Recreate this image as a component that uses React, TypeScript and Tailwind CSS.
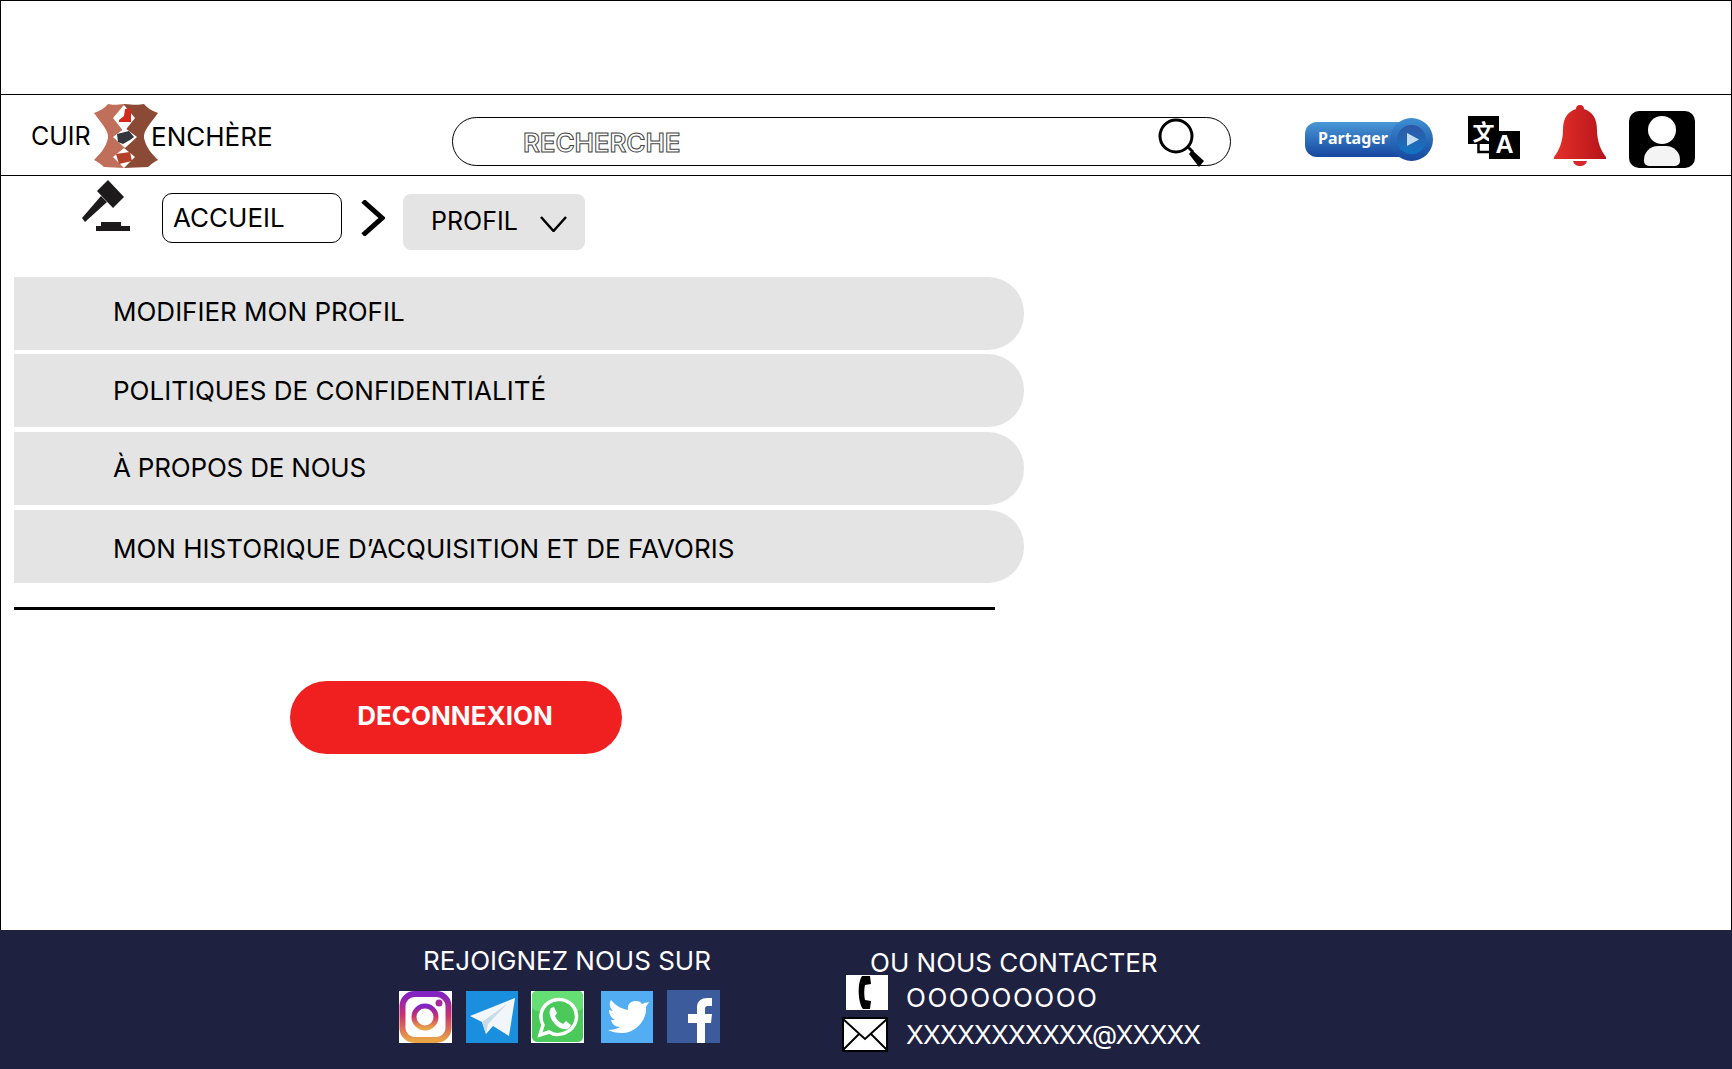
const menuItems = [
  { label: "MODIFIER MON PROFIL", className: "pb-[4px]" },
  { label: "POLITIQUES DE CONFIDENTIALITÉ", className: "" },
  { label: "À PROPOS DE NOUS", className: "mt-[1px] pb-[2px] tracking-[-0.2px]" },
  { label: "MON HISTORIQUE D’ACQUISITION ET DE FAVORIS", className: "mt-[1px] pt-[5px]" },
];

function LeatherLogo() {
  return (
    <svg viewBox="0 0 64 64" className="mt-[1px] h-[64px] w-[64px] shrink-0">
      <path
        d="M14 0 C18 1 22 1 30 0 L30 64 L10 63 C7 60 4 58 0 56 C5 51 12 44 14 34 C15 26 6 18 0 9 C6 7 11 4 14 0Z"
        fill="#c0705a"
      />
      <path
        d="M50 0 C45 1 40 1 30 0 L30 64 L54 63 C57 60 60 58 64 56 C59 51 52 44 50 34 C49 26 58 18 64 9 C58 7 53 4 50 0Z"
        fill="#8a4a35"
      />
      <path d="M30 1 L41 14 L30 28 L19 14Z" fill="#fff" />
      <path d="M31 24 L43 33 L31 44 L19 33Z" fill="#fff" />
      <path d="M30 44 L41 53 L30 64 L19 53Z" fill="#fff" />
      <path d="M31 5 L37 4 L37 18 L25 18 L25 16 L30 12Z" fill="#d22b1e" />
      <path d="M23 30 L35 27 L40 33 L36 36 L29 40 L24 38Z" fill="#34363c" />
      <path d="M22 50 L36 48 L38 57 L25 60Z" fill="#b5412a" />
    </svg>
  );
}

function Gavel() {
  return (
    <svg viewBox="0 0 48 51" className="h-[51px] w-[48px] shrink-0">
      <path d="M26 0 L42 17 L31 28 L15 11Z" fill="#1c1a1a" />
      <path d="M19 16 L25 22 L3 42 L0 38Z" fill="#1c1a1a" />
      <path d="M19 42 H39 V46 H48 V51 H14 V46 H19Z" fill="#1c1a1a" />
    </svg>
  );
}

function SearchGlass() {
  return (
    <svg viewBox="0 0 48 50" className="h-[50px] w-[50px]">
      <circle cx="19" cy="19" r="16" fill="none" stroke="#000" strokeWidth="3" />
      <path d="M30 31 L33 30 L37 34 L35 36Z" fill="#000" />
      <path d="M35 33 L47 44 L42 50 L32 37Z" fill="#000" />
    </svg>
  );
}

function ShareButton() {
  return (
    <div className="relative mt-[9px] ml-[74px] h-[43px] w-[128px] shrink-0">
      <div className="absolute top-[4px] left-0 h-[35px] w-[112px] rounded-[12px] bg-gradient-to-b from-[#4a98d6] to-[#17479f]" />
      <div className="absolute top-0 right-0 flex h-[43px] w-[43px] items-center justify-center rounded-full bg-gradient-to-b from-[#3f8fd2] to-[#17479f]">
        <div className="flex h-[29px] w-[29px] items-center justify-center rounded-full bg-gradient-to-b from-[#2d58a5] to-[#0d74c2]">
          <svg viewBox="0 0 12 13" className="ml-[2px] h-[13px] w-[12px]">
            <path d="M0 0 L12 6.5 L0 13Z" fill="#c4ddf3" />
          </svg>
        </div>
      </div>
      <span className="absolute top-[3px] left-[13px] font-['Noto_Sans',sans-serif] text-[16px] leading-[35px] font-bold text-white">
        Partager
      </span>
    </div>
  );
}

function TranslateIcon() {
  return (
    <div className="relative mt-[4px] ml-[35px] h-[43px] w-[52px] shrink-0">
      <div className="absolute top-0 left-0 flex h-[28px] w-[31px] items-center justify-center bg-black font-['Noto_Sans_CJK_SC',sans-serif] text-[22px] leading-none font-bold text-white">
        文
      </div>
      <svg viewBox="0 0 12 10" className="absolute top-[28px] left-[9px] h-[10px] w-[12px]">
        <path d="M1.5 0 V8 H12" fill="none" stroke="#000" strokeWidth="2.5" />
      </svg>
      <div className="absolute top-[15px] left-[21px] flex h-[28px] w-[31px] items-center justify-center bg-black font-['Liberation_Sans',sans-serif] text-[25px] leading-none font-bold text-white">
        A
      </div>
    </div>
  );
}

function Bell() {
  return (
    <svg viewBox="0 0 52 61" className="mt-[1px] ml-[34px] h-[61px] w-[52px] shrink-0">
      <defs>
        <linearGradient id="bellFill" x1="0" y1="0" x2="1" y2="0">
          <stop offset="0" stopColor="#e53029" />
          <stop offset="1" stopColor="#b5141a" />
        </linearGradient>
      </defs>
      <path
        d="M26 0 C29 0 30 2 30 4 C39 7 43 14 43 25 C43 36 47 46 52 52 L52 54 L0 54 L0 52 C5 46 9 36 9 25 C9 14 13 7 22 4 C22 2 23 0 26 0Z"
        fill="url(#bellFill)"
      />
      <path d="M19 56 H33 C32 60 29 61 26 61 C23 61 20 60 19 56Z" fill="#d8262a" />
    </svg>
  );
}

function ProfileIcon() {
  return (
    <div className="relative mt-[8px] ml-[23px] h-[57px] w-[66px] shrink-0 rounded-[10px] bg-black">
      <div className="absolute top-[5px] left-[19px] h-[28px] w-[28px] rounded-full bg-white" />
      <div className="absolute top-[35px] left-[15px] h-[20px] w-[36px] rounded-t-[14px] rounded-b-[5px] bg-[#f4f4f4]" />
    </div>
  );
}

function Instagram() {
  return (
    <div className="flex h-[52px] w-[53px] items-center justify-center bg-white">
      <svg viewBox="0 0 53 52" className="h-[52px] w-[53px]">
        <defs>
          <linearGradient id="igBorder" x1="0" y1="0" x2="0" y2="1">
            <stop offset="0" stopColor="#8223c4" />
            <stop offset="0.45" stopColor="#c9306f" />
            <stop offset="1" stopColor="#e9a347" />
          </linearGradient>
        </defs>
        <rect x="3.5" y="3" width="46" height="46" rx="12" fill="#fff" stroke="url(#igBorder)" strokeWidth="6" />
        <circle cx="26" cy="26" r="11" fill="none" stroke="url(#igBorder)" strokeWidth="5" />
        <circle cx="40" cy="12" r="3.5" fill="#a62a9a" />
      </svg>
    </div>
  );
}

function Telegram() {
  return (
    <svg viewBox="0 0 52 52" className="ml-[14px] h-[52px] w-[52px] bg-[#1a8fdd]">
      <path d="M4 25 L49 7 L43 45 L27 35 L20 43 L16 31Z" fill="#f1f6fb" />
      <path d="M16 31 L41 13 L22 33 L20 43Z" fill="#c9dbe9" />
    </svg>
  );
}

function WhatsApp() {
  return (
    <svg viewBox="0 0 53 52" className="ml-[13px] h-[52px] w-[53px] bg-white">
      <rect x="1" y="0" width="51" height="51" rx="5" fill="#4bc95a" />
      <rect x="1" y="0" width="51" height="20" rx="5" fill="#65de74" />
      <path
        d="M9 44 L12 34 C8 26 10 17 17 12 C25 6 36 8 42 15 C48 23 46 33 39 39 C32 44 24 45 18 41Z"
        fill="#4bc95a"
        stroke="#fff"
        strokeWidth="3.5"
      />
      <path
        d="M20 17 L23 16 L26 22 L24 25 C26 29 28 31 32 33 L35 30 L40 34 L38 37 C34 40 27 37 23 32 C19 27 17 21 20 17Z"
        fill="#fff"
      />
    </svg>
  );
}

function Twitter() {
  return (
    <svg viewBox="0 0 52 52" className="ml-[17px] h-[52px] w-[52px] bg-[#52adf2]">
      <path
        d="M44 12 L48 11 L45 16 C46 29 35 42 21 42 C15 42 11 41 7 39 C12 39 16 38 19 36 C14 36 11 33 10 29 L14 29 C10 27 8 23 8 19 L12 20 C8 16 8 12 10 9 C15 15 21 18 27 19 C26 13 30 10 35 10 C38 10 40 11 41 13 L46 11Z"
        fill="#fff"
      />
    </svg>
  );
}

function Facebook() {
  return (
    <svg viewBox="0 0 53 53" className="-mt-px ml-[14px] h-[53px] w-[53px] bg-[#3b5b9c]">
      <path
        d="M30 53 V33 H21 V24 H30 V17 C30 11 35 8 40 8 H45 V16 H41 C38 16 38 18 38 20 V24 H45 L44 33 H38 V53Z"
        fill="#fff"
      />
    </svg>
  );
}

function PhoneIcon() {
  return (
    <svg viewBox="0 0 42 35" className="ml-[4px] h-[35px] w-[42px] bg-white">
      <path d="M16 1 L24 1 L25 9 L19 10 C18 14 18 21 19 25 L25 26 L24 34 L17 34 C12 28 11 8 16 1Z" fill="#000" />
    </svg>
  );
}

function MailIcon() {
  return (
    <svg viewBox="0 0 46 35" className="h-[35px] w-[46px] bg-white">
      <rect x="1" y="1" width="44" height="33" fill="#fff" stroke="#000" strokeWidth="2" />
      <path d="M1 2 L23 22 L45 2 M1 33 L17 17 M45 33 L29 17" fill="none" stroke="#000" strokeWidth="2" />
    </svg>
  );
}

export default function App() {
  return (
    <div className="flex h-[1069px] w-[1732px] flex-col overflow-hidden bg-white font-['Inter',sans-serif] text-black">
      <div className="flex min-h-0 flex-1 flex-col border-x border-t border-black">
        <div className="h-[94px] border-b border-black" />

        <header className="flex h-[81px] items-center border-b border-black pl-[30px]">
          <span className="mt-[2px] w-[63px] text-[25px] leading-none">CUIR</span>
          <LeatherLogo />
          <span className="mt-[4px] -ml-[7px] w-[120px] text-[26px] leading-none">ENCHÈRE</span>

          <div className="relative mt-[12px] ml-[181px] flex h-[49px] w-[779px] shrink-0 items-center rounded-full border border-black pt-[4px] pl-[70px]">
            <span className="text-[26px] leading-none font-semibold tracking-[-0.1px] text-white [-webkit-text-stroke:1px_#444]">RECHERCHE</span>
            <div className="absolute -top-px right-[24px]">
              <SearchGlass />
            </div>
          </div>

          <ShareButton />
          <TranslateIcon />
          <Bell />
          <ProfileIcon />
        </header>

        <nav className="flex h-[101px] items-start pl-[81px]">
          <div className="mt-[4px]">
            <Gavel />
          </div>
          <div className="mt-[17px] ml-[32px] flex h-[50px] w-[180px] items-center rounded-[10px] border border-black pb-[1px] pl-[10px] text-[26px] leading-none">
            ACCUEIL
          </div>
          <svg viewBox="0 0 24 36" className="mt-[24px] ml-[19px] h-[36px] w-[24px]">
            <path d="M2 1 L21 18 L2 35" fill="none" stroke="#000" strokeWidth="5" />
          </svg>
          <div className="mt-[18px] ml-[18px] flex h-[56px] w-[182px] items-center rounded-[8px] bg-[#e4e4e4] pb-[2px] pl-[28px] text-[25px] leading-none">
            <span className="w-[109px]">PROFIL</span>
            <svg viewBox="0 0 27 16" className="mt-[6px] h-[16px] w-[27px]">
              <path d="M1 1 L13.5 15 L26 1" fill="none" stroke="#000" strokeWidth="2.5" />
            </svg>
          </div>
        </nav>

        <div className="flex flex-col gap-[4px] pl-[13px]">
          {menuItems.map((item) => (
            <div
              key={item.label}
              className={`flex h-[73px] w-[1010px] items-center rounded-r-[36px] bg-[#e4e4e4] pl-[99px] text-[26px] leading-none ${item.className}`}
            >
              {item.label}
            </div>
          ))}
        </div>

        <div className="mt-[24px] ml-[13px] h-[3px] w-[981px] bg-black" />

        <button className="mt-[71px] ml-[289px] flex h-[73px] w-[332px] items-center justify-center rounded-full bg-[#f02020] pr-[2px] pb-[3px] text-[26px] leading-none font-bold text-white">
          DECONNEXION
        </button>
      </div>

      <footer className="flex h-[139px] bg-[#1f2140] pl-[399px] text-white">
        <div className="flex w-[443px] flex-col">
          <div className="mt-[16px] ml-[24px] text-[26px] leading-[30px]">REJOIGNEZ NOUS SUR</div>
          <div className="mt-[15px] flex items-start">
            <Instagram />
            <Telegram />
            <WhatsApp />
            <Twitter />
            <Facebook />
          </div>
        </div>
        <div className="flex flex-col">
          <div className="mt-[18px] ml-[28px] text-[26px] leading-[30px]">OU NOUS CONTACTER</div>
          <div className="-mt-[3px] flex h-[35px] items-center">
            <PhoneIcon />
            <span className="mt-[10px] ml-[18px] text-[26px] leading-none tracking-[1.5px]">OOOOOOOOO</span>
          </div>
          <div className="mt-[7px] flex h-[35px] items-center">
            <MailIcon />
            <span className="ml-[18px] text-[26px] leading-none tracking-[-0.75px]">XXXXXXXXXXX@XXXXX</span>
          </div>
        </div>
      </footer>
    </div>
  );
}
